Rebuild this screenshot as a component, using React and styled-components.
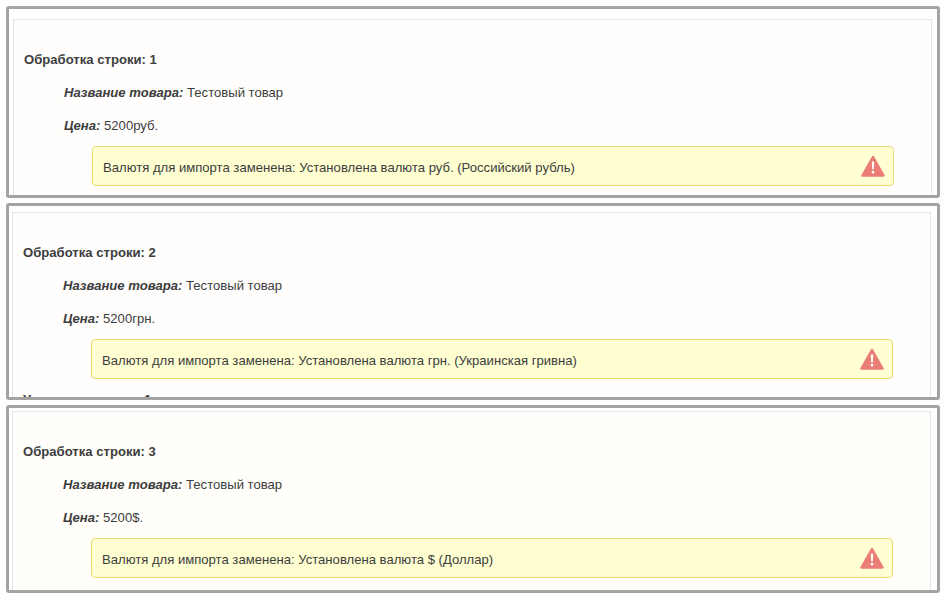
import styled, { createGlobalStyle } from 'styled-components'

const rows = [
	{ id: 1, price: '5200руб.', note: 'Установлена валюта руб. (Российский рубль)', height: 192, left: 4, right: 5, top: 10 },
	{ id: 2, price: '5200грн.', note: 'Установлена валюта грн. (Украинская гривна)', height: 197, left: 3, right: 6, top: 6, next: 'Успешно создано: 1' },
	{ id: 3, price: '5200$.', note: 'Установлена валюта $ (Доллар)', height: 188, left: 3, right: 6, top: 3, warm: true },
]

const WarningIcon = () => (
	<svg width="26" height="24" viewBox="0 0 26 24">
		<path
			d="M13 3 L23.5 21.5 L2.5 21.5 Z"
			fill="#ea7d76"
			stroke="#ea7d76"
			strokeWidth="2.5"
			strokeLinejoin="round"
		/>
		<path d="M11.8 7.5 h2.4 l-0.4 8 h-1.6 Z" fill="#fff" />
		<rect x="11.8" y="17" width="2.4" height="2.4" fill="#fff" />
	</svg>
)

const App = () => {
	return (
		<>
			<GlobalStyle />
			<Page>
				{rows.map((row) => (
					<Frame key={row.id} $height={row.height} $left={row.left} $right={row.right} $top={row.top}>
						<Panel $warm={row.warm}>
							<Heading>Обработка строки: {row.id}</Heading>
							<Field>
								<em>Название товара:</em> Тестовый товар
							</Field>
							<Field>
								<em>Цена:</em> {row.price}
							</Field>
							<Alert>
								<AlertText>Валютя для импорта заменена: {row.note}</AlertText>
								<WarningIcon />
							</Alert>
							{row.next && <Heading>{row.next}</Heading>}
						</Panel>
					</Frame>
				))}
			</Page>
		</>
	)
}

export default App

// ? styled
const GlobalStyle = createGlobalStyle`
	html, body {
		margin: 0;
		padding: 0;
		background: #fefefe;
	}
`

const Page = styled.div`
	display: flex;
	flex-direction: column;
	gap: 5px;
	width: 934px;
	padding: 6px 0 0 6px;
	font-family: 'Liberation Sans', Arial, sans-serif;
	font-size: 13.1px;
	line-height: 18px;
	color: #3d3d3d;
`

const Frame = styled.section`
	box-sizing: border-box;
	height: ${(p) => p.$height}px;
	padding: ${(p) => p.$top}px ${(p) => p.$right}px 0 ${(p) => p.$left}px;
	border: 3px solid #a3a3a3;
	border-radius: 3px;
	overflow: hidden;
	background: #fff;
`

const Panel = styled.div`
	box-sizing: border-box;
	min-height: 100%;
	padding: 31px 0 0 10px;
	border: 1px solid #e4e4e4;
	border-bottom: 0;
	background: ${(p) => (p.$warm ? '#fffefb' : '#fffefd')};
`

const Heading = styled.div`
	font-weight: bold;
	margin-bottom: 15px;
`

const Field = styled.div`
	margin: 0 0 15px 40px;

	&:nth-child(3) {
		margin-bottom: 11px;
	}

	em {
		font-weight: bold;
		font-style: italic;
	}
`

const Alert = styled.div`
	box-sizing: border-box;
	display: flex;
	align-items: center;
	justify-content: space-between;
	height: 40px;
	margin: 0 37px 12px 68px;
	padding: 0 7px 0 10px;
	border: 1px solid #ead96f;
	border-radius: 4px;
	background: #ffffd2;
`

const AlertText = styled.span`
	padding-top: 3px;
`
